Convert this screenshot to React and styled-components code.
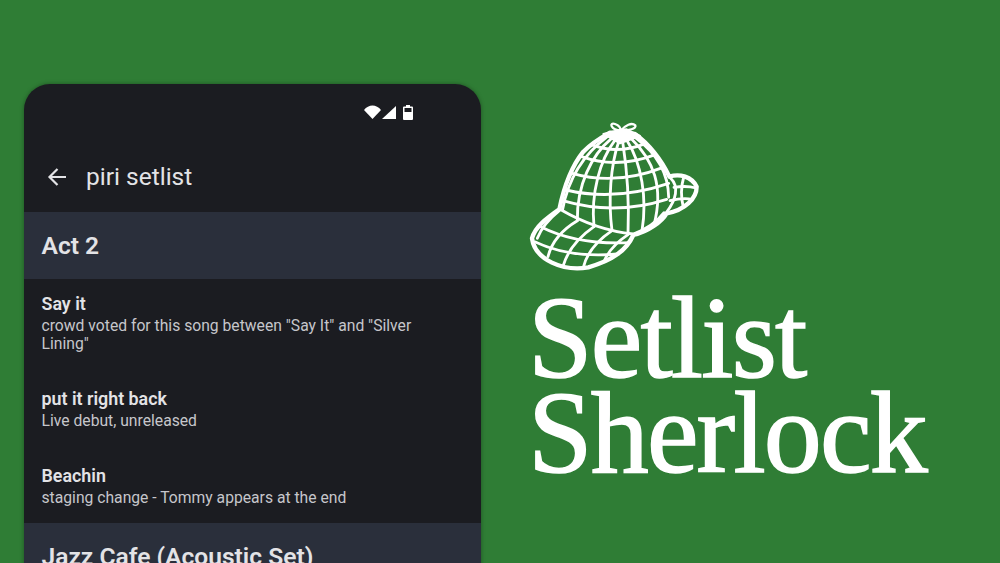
import React from "react";
import styled, { createGlobalStyle } from "styled-components";

const GlobalStyle = createGlobalStyle`
  html, body {
    margin: 0;
    padding: 0;
    background: #2f7d35;
  }
`;

const Page = styled.div`
  width: 1000px;
  height: 563px;
  overflow: hidden;
  display: flex;
  align-items: flex-start;
  background: #2f7d35;
`;

/* Phone */
const Phone = styled.div`
  width: 457px;
  flex-shrink: 0;
  margin: 84px 0 0 24px;
  background: #1b1c21;
  border-radius: 26px 26px 0 0;
  box-shadow: 0 0 4px rgba(0, 0, 0, 0.35);
  font-family: Roboto, sans-serif;
  color: #e3e3e6;
`;

const StatusBar = styled.div`
  height: 56px;
  padding-right: 68px;
  display: flex;
  justify-content: flex-end;
  align-items: center;
  gap: 1px;
`;

const BatteryIcon = styled.svg`
  margin-left: 6px;
`;

const Toolbar = styled.div`
  height: 72px;
  padding: 2px 0 0 21px;
  box-sizing: border-box;
  display: flex;
  align-items: center;
  gap: 17px;
`;

const ToolbarTitle = styled.div`
  font-size: 24.5px;
  line-height: 32px;
  color: #e3e3e6;
`;

const SectionHeader = styled.div`
  height: 67px;
  padding-left: 17.5px;
  display: flex;
  align-items: center;
  background: #2a2f3b;
  font-size: 24.6px;
  font-weight: 600;
`;

const SongList = styled.div`
  padding: 13.5px 17.5px 15.6px;
  display: flex;
  flex-direction: column;
  gap: 34.2px;
`;

const Song = styled.div`
  display: flex;
  flex-direction: column;
  gap: 3.5px;
`;

const SongTitle = styled.div`
  font-size: 17.85px;
  line-height: 21px;
  font-weight: 600;
`;

const SongNote = styled.div`
  font-size: 15.7px;
  line-height: 18.3px;
  color: #c6c6cb;
  width: 400px;
`;

/* Brand */
const Brand = styled.div`
  margin: 110px 0 0 45px;
  display: flex;
  flex-direction: column;
`;

const HatMark = styled.svg`
  width: 190px;
  height: 170px;
  margin-left: -6px;
`;

const Wordmark = styled.div`
  margin: 11px 0 0 2px;
  font-family: "Liberation Serif", serif;
  font-size: 116px;
  line-height: 95px;
  letter-spacing: -1.8px;
  color: #fff;
  -webkit-text-stroke: 1.5px #fff;
`;

const WordLine = styled.div`
  white-space: nowrap;
`;

const songs = [
  {
    title: "Say it",
    note: 'crowd voted for this song between "Say It" and "Silver Lining"',
  },
  { title: "put it right back", note: "Live debut, unreleased" },
  { title: "Beachin", note: "staging change - Tommy appears at the end" },
];

const crownLines = [
  // meridians, knot to seam
  "M262 80C195 130 145 205 128 298",
  "M274 86C215 135 170 225 172 332",
  "M284 92C240 150 212 250 222 350",
  "M296 95C272 165 264 270 276 362",
  "M308 95C320 170 328 270 324 372",
  "M320 90C365 160 382 265 366 362",
  "M334 86C400 150 432 230 402 345",
  "M348 84C410 130 445 190 446 262",
  // latitudes
  "M215 104Q290 135 378 100",
  "M185 140Q290 178 406 134",
  "M157 190Q285 228 430 172",
  "M138 240Q285 275 446 220",
  "M128 272Q285 318 440 268",
  "M120 298Q230 362 340 372Q400 350 432 308",
];

const brimLines = [
  "M62 350Q170 405 328 398",
  "M46 396Q150 445 292 432",
  "M118 302Q70 340 52 385",
  "M172 332Q100 375 84 440",
  "M222 350Q150 400 130 466",
  "M276 362Q205 410 190 472",
  "M324 374Q270 410 252 455",
];

const visorLines = [
  "M452 205C478 230 468 270 440 306",
  "M462 232Q500 226 528 234",
  "M450 272Q490 262 516 268",
  "M492 198Q478 245 490 292",
];

function Hat() {
  return (
    <HatMark viewBox="0 0 570 510" fill="none" stroke="#fff" strokeLinecap="round" strokeLinejoin="round">
      <path
        d="M36 385C45 350 80 325 118 298C130 240 150 175 190 125C215 100 245 82 270 68L345 72C385 100 425 150 448 200C480 190 515 200 530 230C530 265 495 300 440 310C425 335 385 365 340 375C320 420 280 450 205 472C130 485 45 450 36 385Z"
        strokeWidth="13"
      />
      <path d="M250 72L300 100L360 78L320 58L298 60Z" fill="#fff" strokeWidth="6" />
      <path
        d="M302 62C272 60 266 36 285 42C296 46 302 55 302 62C316 46 335 36 346 46C350 56 326 62 302 62Z"
        strokeWidth="7"
      />
      {[...crownLines, ...brimLines, ...visorLines].map((d) => (
        <path key={d} d={d} strokeWidth="8.5" />
      ))}
    </HatMark>
  );
}

export default function App() {
  return (
    <Page>
      <GlobalStyle />
      <Phone>
        <StatusBar>
          <svg width="17" height="14" viewBox="0 0 17 14">
            <path d="M0 5C4.5 -1 12.5 -1 17 5L8.5 14Z" fill="#fff" />
          </svg>
          <svg width="14" height="13" viewBox="0 0 14 13">
            <path d="M14 0V13H0Z" fill="#fff" />
          </svg>
          <BatteryIcon width="10" height="15" viewBox="0 0 10 15">
            <path d="M3 0H7V1.5H9Q10 1.5 10 2.5V14Q10 15 9 15H1Q0 15 0 14V2.5Q0 1.5 1 1.5H3Z" fill="#fff" />
            <rect x="1.5" y="3" width="7" height="4" fill="#1b1c21" />
          </BatteryIcon>
        </StatusBar>
        <Toolbar>
          <svg width="24" height="24" viewBox="0 0 24 24" fill="none" stroke="#e3e3e6" strokeWidth="2.2">
            <path d="M21 12H5M12.5 4L4.5 12L12.5 20" />
          </svg>
          <ToolbarTitle>piri setlist</ToolbarTitle>
        </Toolbar>
        <SectionHeader>Act 2</SectionHeader>
        <SongList>
          {songs.map((song) => (
            <Song key={song.title}>
              <SongTitle>{song.title}</SongTitle>
              <SongNote>{song.note}</SongNote>
            </Song>
          ))}
        </SongList>
        <SectionHeader>Jazz Cafe (Acoustic Set)</SectionHeader>
      </Phone>
      <Brand>
        <Hat />
        <Wordmark>
          <WordLine>Setlist</WordLine>
          <WordLine>Sherlock</WordLine>
        </Wordmark>
      </Brand>
    </Page>
  );
}
